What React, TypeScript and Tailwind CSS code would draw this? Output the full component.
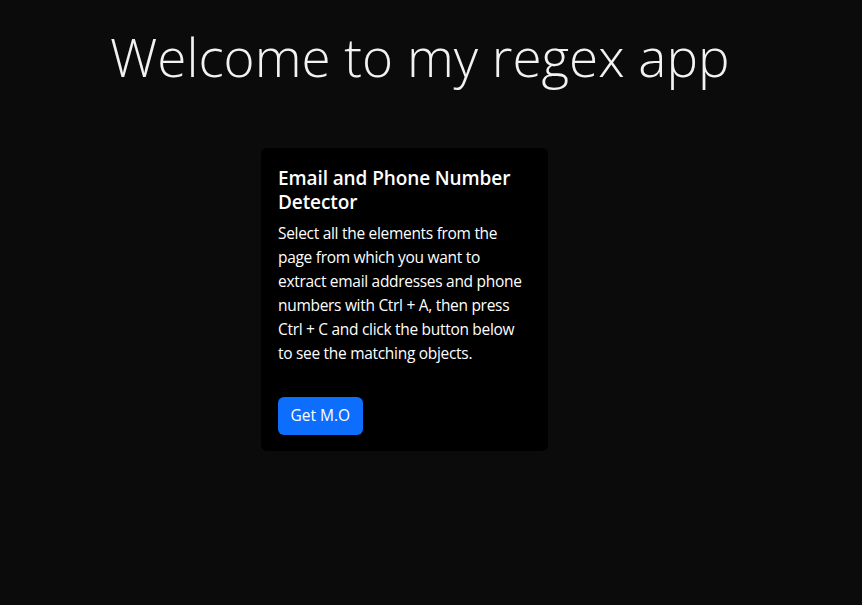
export default function App() {
    return (
        <div className="min-h-[605px] w-full bg-[#0b0b0b] text-white" style={{ fontFamily: '"Open Sans", "Noto Sans", sans-serif' }}>
            <h1 className="pt-[25px] pl-[110px] text-[53px] font-light leading-[64px] text-[#f2f2f2]">Welcome to my regex app</h1>
            <div className="ml-[261px] mt-[59px] w-[287px] rounded-md bg-black px-[17px] pt-[18px] pb-4">
                <h5 className="text-[19px] font-semibold leading-6 tracking-[-0.1px]">Email and Phone Number Detector</h5>
                <p className="mt-[7px] whitespace-nowrap text-[15.5px] leading-6 tracking-[-0.3px]">
                    Select all the elements from the<br />
                    page from which you want to<br />
                    extract email addresses and phone<br />
                    numbers with Ctrl + A, then press<br />
                    Ctrl + C and click the button below<br />
                    to see the matching objects.
                </p>
                <button className="mt-8 h-[38px] rounded-md bg-[#0d6efd] px-[12.5px] text-[15.5px] text-white">Get M.O</button>
            </div>
        </div>
    )
}
